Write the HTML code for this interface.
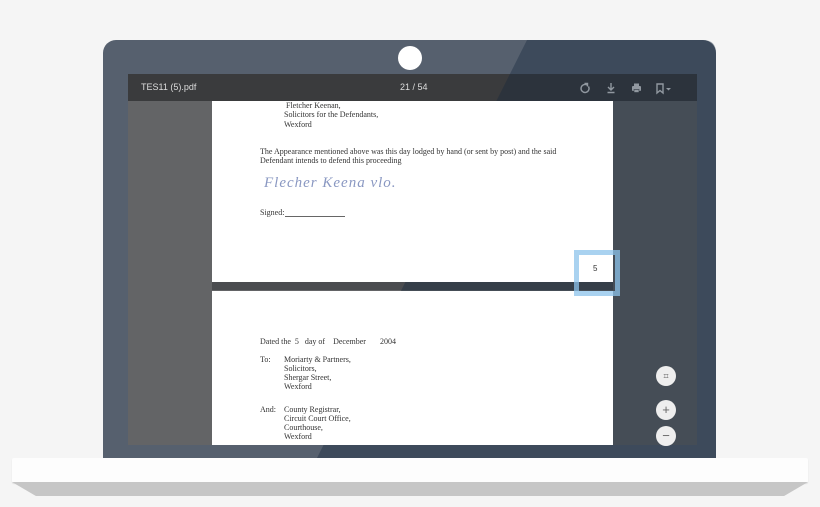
<!DOCTYPE html>
<html><head><meta charset="utf-8"><style>
*{margin:0;padding:0;box-sizing:border-box}
body{width:820px;height:507px;background:#f5f5f5;position:relative;overflow:hidden;font-family:"Liberation Serif",serif}
.abs{position:absolute}
.page{background:#fff;left:212px;width:401px;color:#333;font-size:8px;line-height:9.3px}
.t{position:absolute;white-space:nowrap}
.btn{width:20px;height:20px;border-radius:50%;background:#eee;left:656px;color:#666;font:13px/20px "Liberation Sans",sans-serif;text-align:center}
</style></head><body>
<div class="abs" style="left:103px;top:40px;width:613px;height:418px;background:#56606e;border-radius:13px 13px 0 0"></div>
<div class="abs" style="left:398px;top:46px;width:24px;height:24px;border-radius:50%;background:#fff"></div>
<div class="abs" style="left:128px;top:74px;width:569px;height:371px;background:#636466"></div>
<div class="abs" style="left:128px;top:74px;width:569px;height:27px;background:#3a3b3d;color:#ddd;font-family:'Liberation Sans',sans-serif;font-size:9px">
    <span class="t" style="left:13px;top:8px">TES11 (5).pdf</span>
    <span class="t" style="left:272px;top:8px">21 / 54</span>
    <svg class="abs" style="left:450px;top:6px" width="110" height="16" viewBox="0 0 110 16">
      <g fill="none" stroke="#ddd" stroke-width="1.4">
        <path d="M9 5a4 4 0 1 0 1.5 1.5"/><path d="M6.5 3.5h3v3"/>
        <path d="M33 3v7M30 7l3 3 3-3M29.5 12.5h7"/>
        <path d="M79 4h6v9l-3-2.5-3 2.5z"/>
      </g>
      <rect x="54" y="6" width="9" height="5" rx="1" fill="#ddd"/><rect x="56" y="3.5" width="5" height="3" fill="#ddd"/><rect x="56" y="9.5" width="5" height="3" fill="#ddd" stroke="#3a3b3d" stroke-width=".6"/>
      <path d="M88 8h5l-2.5 2.5z" fill="#ddd"/>
    </svg>
</div>
<div class="abs" style="left:212px;top:282px;width:401px;height:8px;background:#4a4c4f"></div>
<svg class="abs" style="left:0;top:0" width="820" height="507"><path d="M527 40H703Q716 40 716 53V458H317Z" fill="rgba(20,40,60,0.38)"/></svg>
<div class="abs page" style="top:101px;height:181px">
    <span class="t" style="left:74px;top:0">Fletcher Keenan,</span>
    <span class="t" style="left:72px;top:9px">Solicitors for the Defendants,</span>
    <span class="t" style="left:72px;top:19px">Wexford</span>
    <span class="t" style="left:48px;top:46px">The Appearance mentioned above was this day lodged by hand (or sent by post) and the said</span>
    <span class="t" style="left:48px;top:55px">Defendant intends to defend this proceeding</span>
    <span class="t" style="left:52px;top:74px;font:italic 15px 'Liberation Serif',serif;color:#8a98c2;letter-spacing:1px">Flecher Keena vlo.</span>
    <span class="t" style="left:48px;top:107px">Signed:</span>
    <div class="abs" style="left:73px;top:115px;width:60px;border-top:1px solid #666"></div>
    <span class="t" style="left:381px;top:163px;font-family:'Liberation Sans',sans-serif;font-size:8px">5</span>
</div>
<div class="abs page" style="top:291px;height:154px">
    <span class="t" style="left:48px;top:46px">Dated the&nbsp; 5 &nbsp;&nbsp;day of &nbsp;&nbsp;&nbsp;December &nbsp;&nbsp;&nbsp;&nbsp;&nbsp;&nbsp;2004</span>
    <span class="t" style="left:48px;top:64px">To:</span>
    <span class="t" style="left:72px;top:64px">Moriarty &amp; Partners,</span>
    <span class="t" style="left:72px;top:73px">Solicitors,</span>
    <span class="t" style="left:72px;top:82px">Shergar Street,</span>
    <span class="t" style="left:72px;top:91px">Wexford</span>
    <span class="t" style="left:48px;top:114px">And:</span>
    <span class="t" style="left:72px;top:114px">County Registrar,</span>
    <span class="t" style="left:72px;top:123px">Circuit Court Office,</span>
    <span class="t" style="left:72px;top:132px">Courthouse,</span>
    <span class="t" style="left:72px;top:141px">Wexford</span>
</div>
<div class="abs btn" style="top:366px;font-size:9px">⌗</div>
<div class="abs btn" style="top:400px">+</div>
<div class="abs btn" style="top:426px">−</div>
<div class="abs" style="left:574px;top:250px;width:46px;height:46px;border:5px solid rgba(140,195,235,0.75)"></div>
<div class="abs" style="left:12px;top:458px;width:796px;height:25px;background:#fdfdfd;border-radius:2px;box-shadow:0 1px 1px #ddd"></div>
<div class="abs" style="left:12px;top:482px;width:796px;height:14px;background:#c6c6c6;clip-path:polygon(0 0,100% 0,97% 100%,3% 100%)"></div>
</body></html>
